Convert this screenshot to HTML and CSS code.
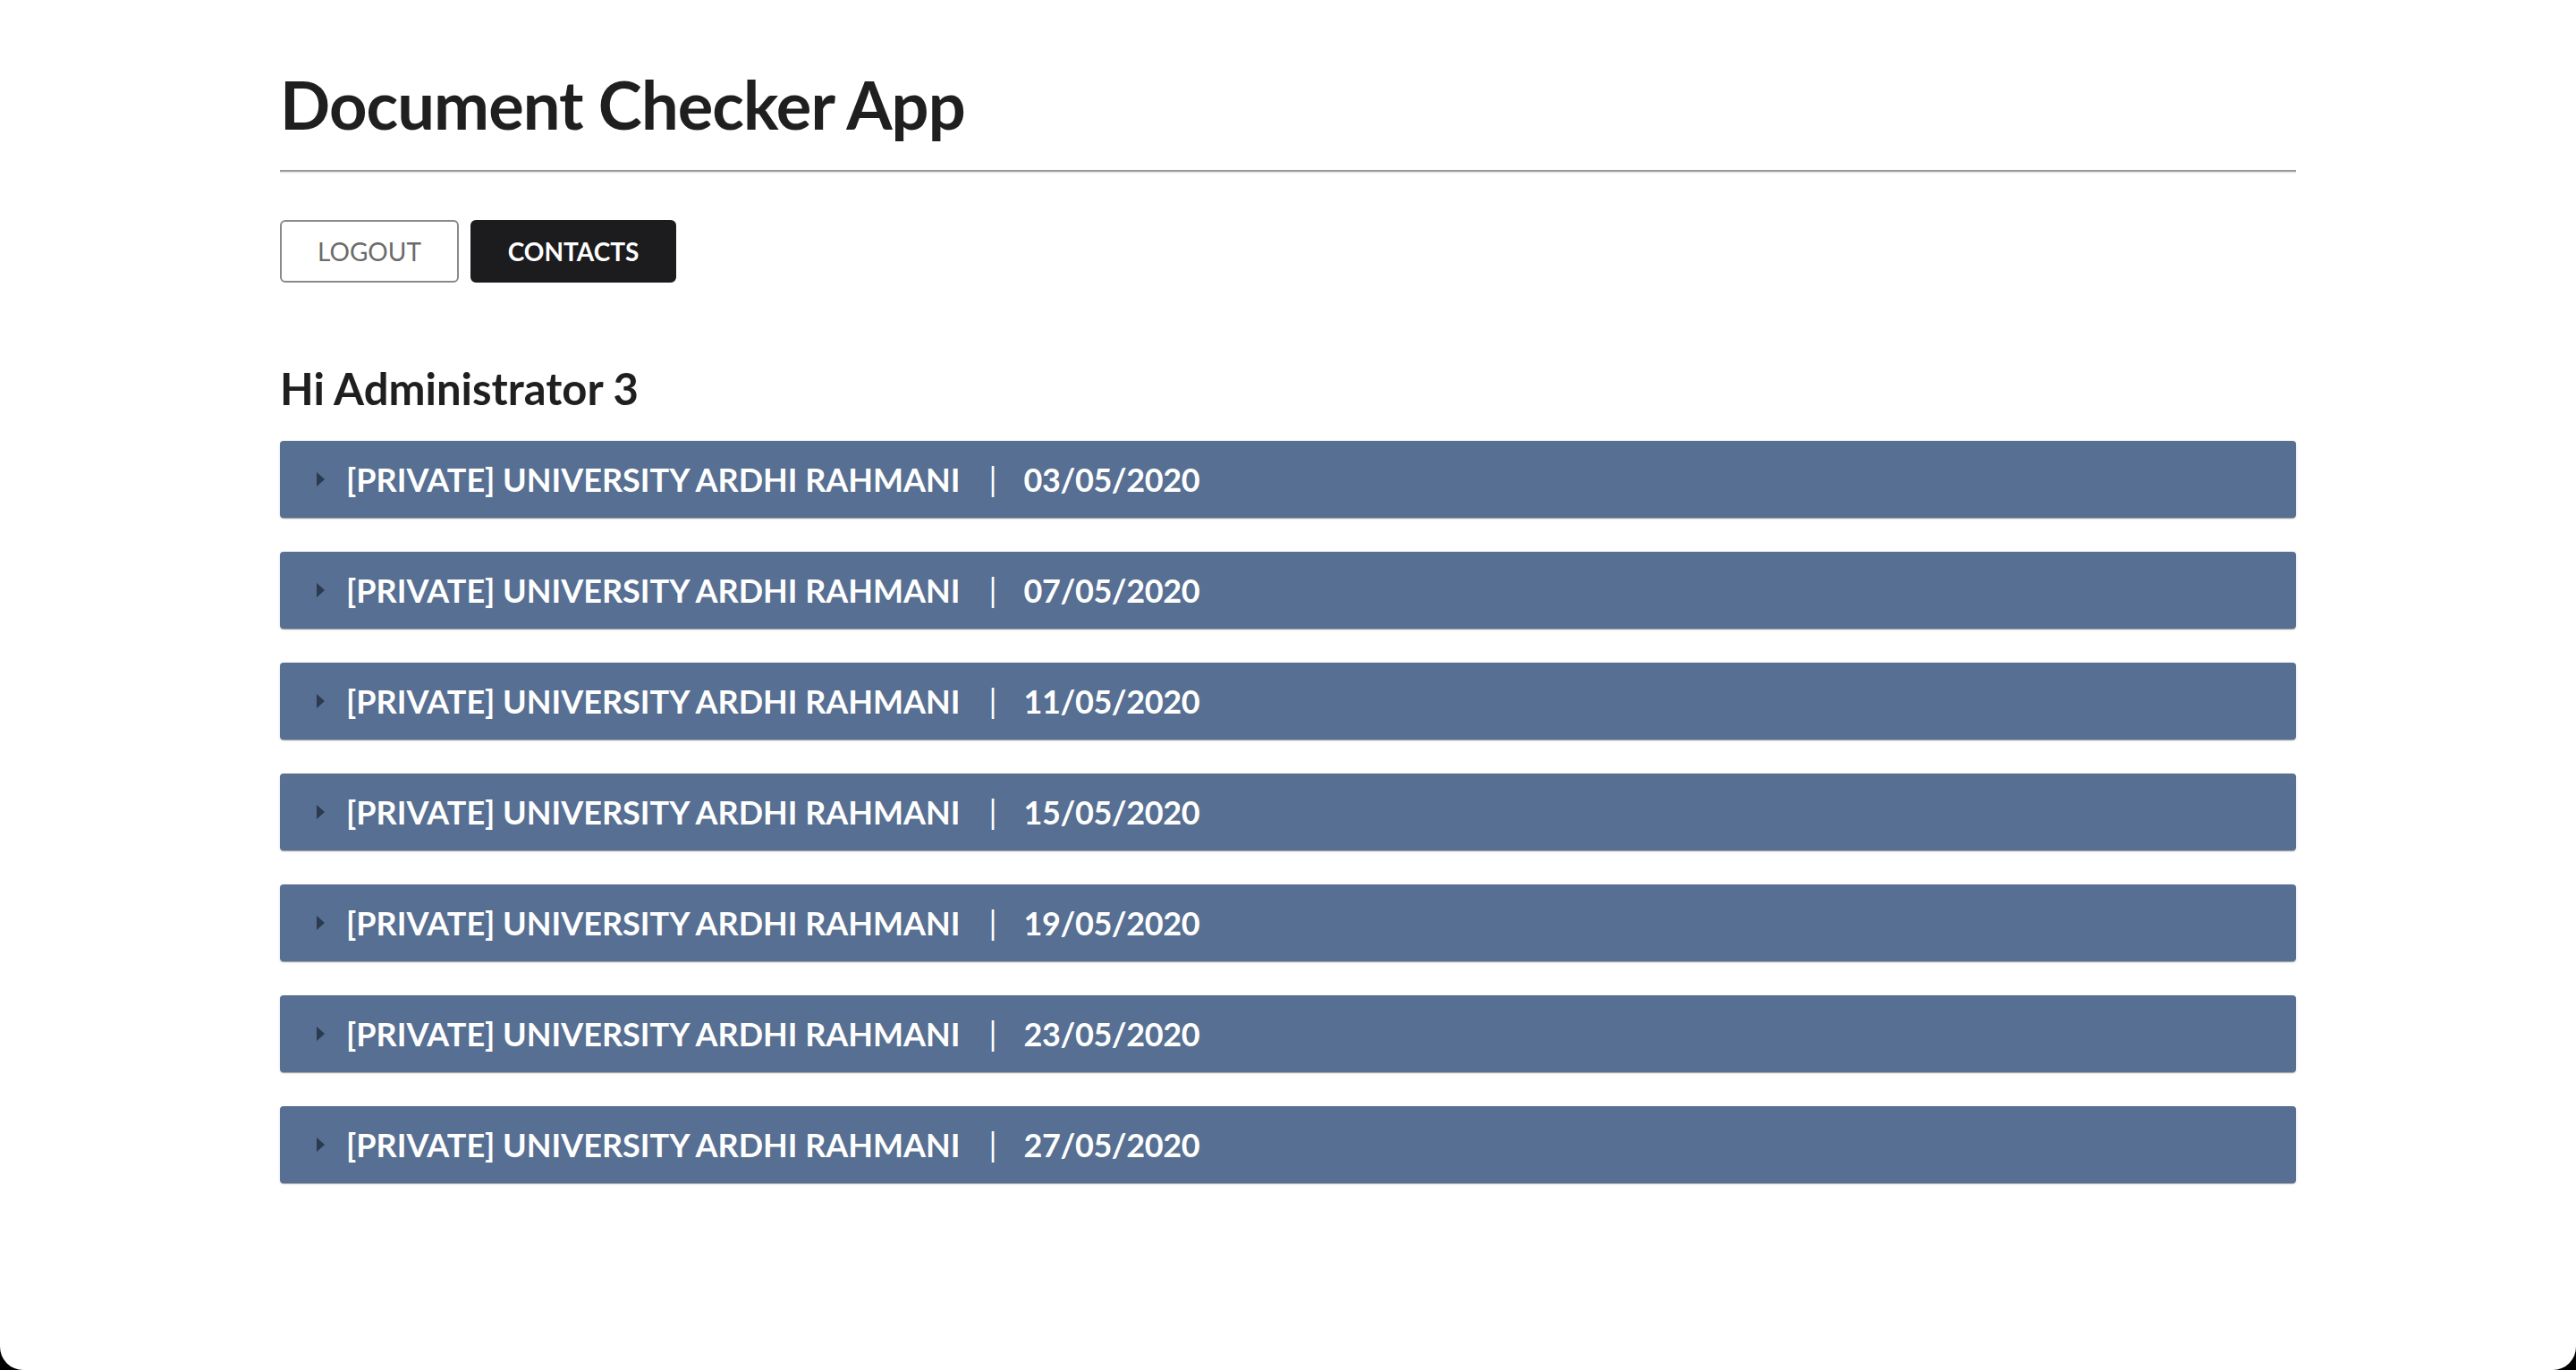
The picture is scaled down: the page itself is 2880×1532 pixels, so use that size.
FILE: index.html
```html
<!DOCTYPE html>
<html lang="en">
<head>
<meta charset="utf-8">
<title>Document Checker App</title>
<link rel="stylesheet" href="styles.css">
</head>
<body>
<div class="window">
  <main class="container">
    <h1 class="title">Document Checker App</h1>
    <hr class="rule">
    <div class="actions">
      <button class="btn btn-outline">LOGOUT</button>
      <button class="btn btn-dark">CONTACTS</button>
    </div>
    <h2 class="greeting">Hi Administrator 3</h2>
    <div class="list">
      <div class="item"><span class="arrow"></span><span class="name">[PRIVATE] UNIVERSITY ARDHI RAHMANI</span><span class="sep">|</span><span class="date">03/05/2020</span></div>
      <div class="item"><span class="arrow"></span><span class="name">[PRIVATE] UNIVERSITY ARDHI RAHMANI</span><span class="sep">|</span><span class="date">07/05/2020</span></div>
      <div class="item"><span class="arrow"></span><span class="name">[PRIVATE] UNIVERSITY ARDHI RAHMANI</span><span class="sep">|</span><span class="date">11/05/2020</span></div>
      <div class="item"><span class="arrow"></span><span class="name">[PRIVATE] UNIVERSITY ARDHI RAHMANI</span><span class="sep">|</span><span class="date">15/05/2020</span></div>
      <div class="item"><span class="arrow"></span><span class="name">[PRIVATE] UNIVERSITY ARDHI RAHMANI</span><span class="sep">|</span><span class="date">19/05/2020</span></div>
      <div class="item"><span class="arrow"></span><span class="name">[PRIVATE] UNIVERSITY ARDHI RAHMANI</span><span class="sep">|</span><span class="date">23/05/2020</span></div>
      <div class="item"><span class="arrow"></span><span class="name">[PRIVATE] UNIVERSITY ARDHI RAHMANI</span><span class="sep">|</span><span class="date">27/05/2020</span></div>
    </div>
  </main>
</div>
</body>
</html>
```
FILE: styles.css
```css
html, body {
  margin: 0;
  padding: 0;
  background: #000;
}
body {
  font-family: Lato, "Liberation Sans", sans-serif;
  color: #1f1f1f;
}
.window {
  height: 1532px;
  background: #fff;
  border-radius: 0 0 26px 26px;
  overflow: hidden;
}
.container {
  width: 2254px;
  margin: 0 auto;
  padding-top: 72px;
}
.title {
  margin: 0;
  font-size: 74px;
  line-height: 89px;
  font-weight: 700;
  letter-spacing: -0.9px;
  color: #1f1f1f;
}
.rule {
  margin: 29px 0 0 0;
  height: 0;
  border: 0;
  border-top: 2px solid #999;
  border-bottom: 2px solid #ececec;
}
.actions {
  display: flex;
  gap: 13px;
  margin-top: 52px;
}
.btn {
  height: 70px;
  box-sizing: border-box;
  border-radius: 6px;
  font-family: Lato, "Liberation Sans", sans-serif;
  font-size: 28px;
  padding: 0;
}
.btn-outline {
  width: 200px;
  background: #fff;
  border: 2px solid #8a8a8a;
  color: #6b6b6b;
  font-weight: 400;
}
.btn-dark {
  width: 230px;
  background: #1c1c1e;
  border: 2px solid #1c1c1e;
  color: #fff;
  font-weight: 700;
}
.greeting {
  margin: 89px 0 0 0;
  font-size: 49px;
  line-height: 58px;
  font-weight: 700;
  color: #1f1f1f;
}
.list {
  display: flex;
  flex-direction: column;
  gap: 38px;
  margin-top: 30px;
}
.item {
  height: 86px;
  display: flex;
  align-items: center;
  padding-left: 41px;
  background: #566f92;
  border-radius: 4px;
  box-shadow: 0 2px 1px -1px rgba(0,0,0,0.2), 0 1px 1px 0 rgba(0,0,0,0.14), 0 1px 3px 0 rgba(0,0,0,0.12);
  color: #fff;
  font-size: 36px;
  font-weight: 700;
}
.arrow {
  width: 0;
  height: 0;
  border-top: 8px solid transparent;
  border-bottom: 8px solid transparent;
  border-left: 9px solid #2c3a50;
  margin-right: 24px;
}
.sep {
  font-weight: 400;
  margin: 0 30px 0 32px;
}
.date {
  letter-spacing: -0.4px;
}
```
